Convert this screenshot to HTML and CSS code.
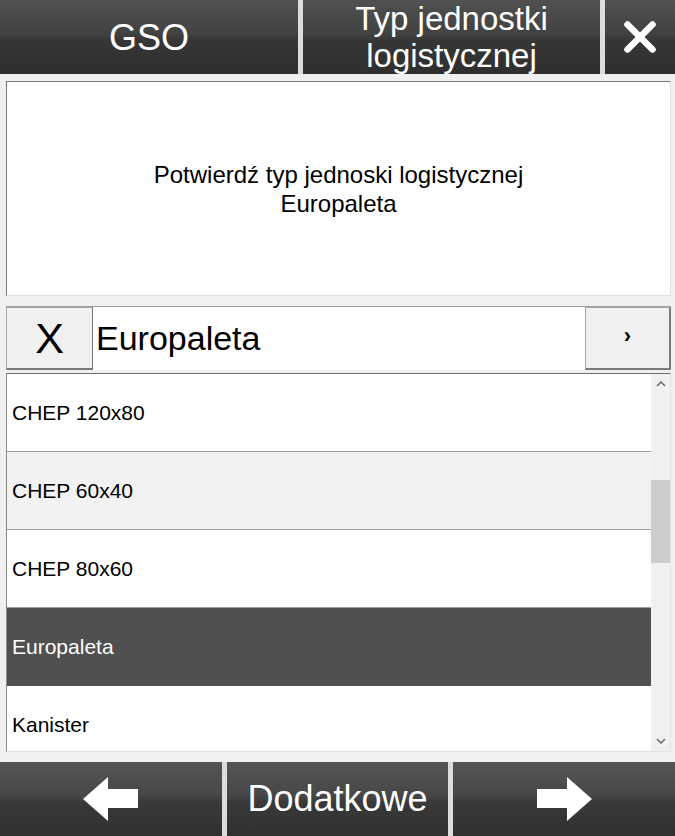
FILE: index.html
```html
<!DOCTYPE html>
<html lang="pl">
<head>
<meta charset="utf-8">
<title>Typ jednostki logistycznej</title>
<link rel="stylesheet" href="styles.css">
</head>
<body>
<div class="app">
  <div class="header">
    <div class="hbtn gso">GSO</div>
    <div class="hbtn title">Typ jednostki<br>logistycznej</div>
    <div class="hbtn close">
      <svg width="34" height="34" viewBox="0 0 34 34"><path d="M4.5 4.5 L29.5 29.5 M29.5 4.5 L4.5 29.5" stroke="#fff" stroke-width="6.5" stroke-linecap="round" fill="none"/></svg>
    </div>
  </div>

  <div class="message">
    <div>Potwierdź typ jednoski logistycznej<br>Europaleta</div>
  </div>

  <div class="search">
    <div class="clear-btn">X</div>
    <div class="search-input">Europaleta</div>
    <div class="next-btn">›</div>
  </div>

  <div class="list">
    <div class="items">
      <div class="item">CHEP 120x80</div>
      <div class="item alt">CHEP 60x40</div>
      <div class="item">CHEP 80x60</div>
      <div class="item selected">Europaleta</div>
      <div class="item">Kanister</div>
    </div>
    <div class="scrollbar">
      <div class="sb-arrow">
        <svg width="10" height="8" viewBox="0 0 10 8"><path d="M1 6 L5 2 L9 6" stroke="#606060" stroke-width="1.4" fill="none"/></svg>
      </div>
      <div class="sb-track">
        <div class="sb-thumb"></div>
      </div>
      <div class="sb-arrow">
        <svg width="10" height="8" viewBox="0 0 10 8"><path d="M1 2 L5 6 L9 2" stroke="#606060" stroke-width="1.4" fill="none"/></svg>
      </div>
    </div>
  </div>

  <div class="footer">
    <div class="fbtn back">
      <svg width="56" height="44" viewBox="0 0 56 44"><polygon points="0,22 25,0 25,12 55,12 55,31 25,31 25,44" fill="#fff"/></svg>
    </div>
    <div class="fbtn more">Dodatkowe</div>
    <div class="fbtn next">
      <svg width="56" height="44" viewBox="0 0 56 44"><polygon points="56,22 31,0 31,12 1,12 1,31 31,31 31,44" fill="#fff"/></svg>
    </div>
  </div>
</div>
</body>
</html>
```

FILE: styles.css
```css
html, body {
  margin: 0;
  padding: 0;
}
body {
  background: #f0f0f0;
  font-family: "Liberation Sans", Arial, sans-serif;
  color: #000;
}
.app {
  width: 675px;
  height: 836px;
  display: flex;
  flex-direction: column;
  overflow: hidden;
}

/* header */
.header {
  display: flex;
  gap: 5px;
  height: 74px;
  flex: none;
  background: #dcdcdc;
}
.hbtn {
  background: linear-gradient(#505050 0%, #424242 45%, #363636 55%, #2f2f2f 100%);
  color: #fff;
  font-size: 36px;
  line-height: 37px;
  text-align: center;
  display: flex;
  align-items: center;
  justify-content: center;
}
.gso { width: 298px; }
.title {
  width: 297px;
  font-size: 33px;
  line-height: 37px;
}
.close { flex: 1; }

/* message */
.message {
  margin: 7px 4px 0 6px;
  height: 215px;
  box-sizing: border-box;
  background: #fff;
  border: 1px solid;
  border-color: #7a7a7a #e3e3e3 #e3e3e3 #7a7a7a;
  display: flex;
  align-items: center;
  justify-content: center;
  text-align: center;
  font-size: 24px;
  line-height: 29px;
  flex: none;
}

/* search row */
.search {
  margin: 10px 4px 0 6px;
  height: 64px;
  display: flex;
  flex: none;
  background: #fff;
  border-top: 1px solid #a0a0a0;
  box-sizing: border-box;
}
.clear-btn {
  width: 87px;
  box-sizing: border-box;
  background: #f0f0f0;
  border: 1px solid #a8a8a8;
  border-right-color: #7a7a7a;
  border-bottom: 2px solid #7a7a7a;
  font-size: 43px;
  display: flex;
  align-items: center;
  justify-content: center;
}
.search-input {
  flex: 1;
  font-size: 34px;
  display: flex;
  align-items: center;
  padding-left: 3px;
  background: #fff;
}
.next-btn {
  width: 86px;
  box-sizing: border-box;
  background: #f0f0f0;
  border: 1px solid #a8a8a8;
  border-right: 2px solid #7a7a7a;
  border-bottom: 2px solid #7a7a7a;
  font-size: 22px;
  font-weight: bold;
  display: flex;
  align-items: center;
  justify-content: center;
  padding-bottom: 4px;
}

/* list */
.list {
  margin: 3px 4px 0 6px;
  height: 379px;
  box-sizing: border-box;
  border-top: 1px solid #6e6e6e;
  border-left: 1px solid #8a8a8a;
  border-right: 1px solid #e3e3e3;
  border-bottom: 1px solid #e3e3e3;
  display: flex;
  overflow: hidden;
  flex: none;
  background: #fff;
}
.items {
  flex: 1;
  overflow: hidden;
}
.item {
  height: 77px;
  border-bottom: 1px solid #a0a0a0;
  background: #fff;
  font-size: 21px;
  display: flex;
  align-items: center;
  padding-left: 5px;
}
.item.alt { background: #f2f2f2; }
.item.selected {
  background: #505050;
  color: #fff;
  border-bottom-color: #505050;
}
.scrollbar {
  width: 19px;
  background: #f0f0f0;
  display: flex;
  flex-direction: column;
}
.sb-arrow {
  height: 20px;
  display: flex;
  align-items: center;
  justify-content: center;
}
.sb-track {
  flex: 1;
  padding-top: 86px;
}
.sb-thumb {
  height: 83px;
  background: #cdcdcd;
}

/* footer */
.footer {
  margin-top: 10px;
  height: 74px;
  display: flex;
  gap: 5px;
  flex: none;
  background: #dcdcdc;
}
.fbtn {
  background: linear-gradient(#555555 0%, #474747 45%, #393939 55%, #303030 100%);
  color: #fff;
  font-size: 36px;
  display: flex;
  align-items: center;
  justify-content: center;
}
.back { width: 222px; }
.more { width: 221px; }
.next { flex: 1; }
```
